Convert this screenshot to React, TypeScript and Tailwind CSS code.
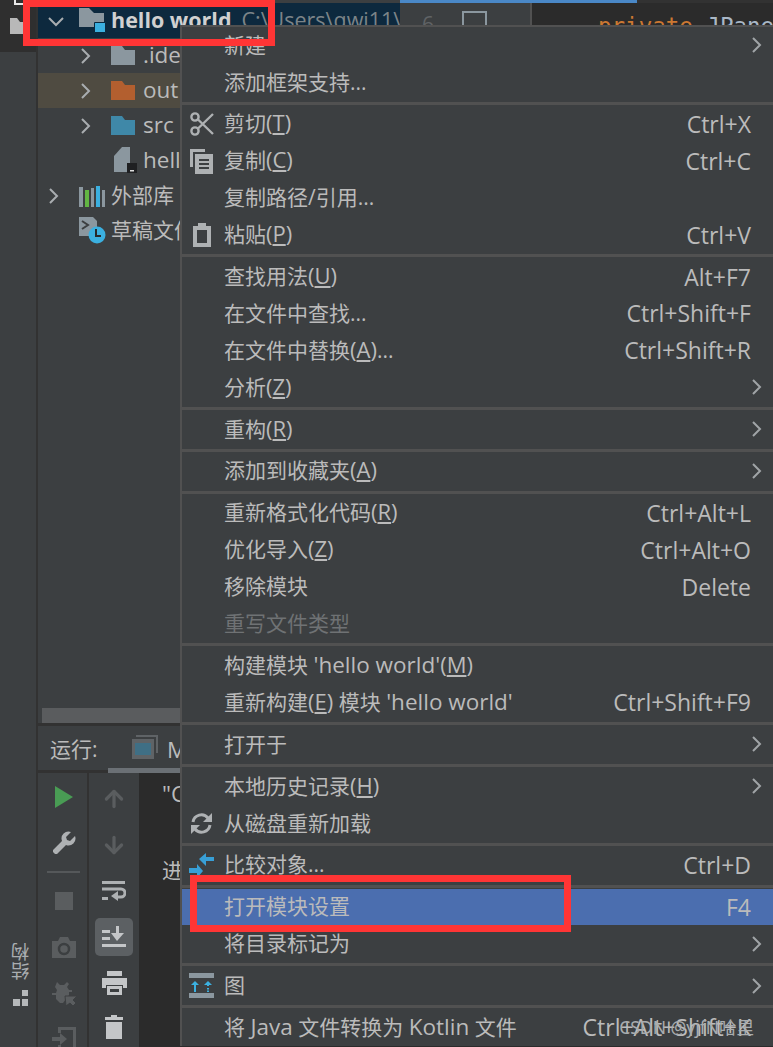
import React from "react";
import { ArrowDown, ArrowUp } from "lucide-react";

// --- small icons ---
const Chevron = ({ open = false }: { open?: boolean }) => (
  <svg width="18" height="18" viewBox="0 0 18 18" fill="none" stroke="#a9adb0" strokeWidth="2">
    {open ? <path d="M2 6l7 7 7-7" /> : <path d="M3 2l7 7-7 7" />}
  </svg>
);

const Folder = ({ color }: { color: string }) => (
  <svg width="24" height="19" viewBox="0 0 24 19">
    <path d="M0 0h11l3 4h10v15H0z" fill={color} />
  </svg>
);

const Submenu = () => (
  <svg width="10" height="16" viewBox="0 0 10 16" fill="none" stroke="#a0a4a7" strokeWidth="2">
    <path d="M1 1l7 7-7 7" />
  </svg>
);

const ScissorsIcon = () => (
  <svg width="24" height="24" viewBox="0 0 24 24" fill="none" stroke="#aeb1b3" strokeWidth="2.4">
    <circle cx="5" cy="5" r="3.6" />
    <circle cx="5" cy="19" r="3.6" />
    <path d="M8 7.5L23 22M8 16.5L23 2" />
  </svg>
);

const CopyIcon = () => (
  <svg width="23" height="25" viewBox="0 0 23 25">
    <path d="M0 0h15v3H3v15H0z" fill="#aeb1b3" />
    <path d="M5 5h18v20H5z" fill="#aeb1b3" />
    <path d="M9 10h10v2H9zM9 14h10v2H9zM9 18h10v2H9z" fill="#3c3f41" />
  </svg>
);

const PasteIcon = () => (
  <svg width="18" height="24" viewBox="0 0 18 24">
    <path d="M0 3h5V0h8v3h5v21H0z" fill="#aeb1b3" />
    <path d="M4 7h10v13H4z" fill="#3c3f41" />
  </svg>
);

const ReloadIcon = () => (
  <svg width="23" height="23" viewBox="0 0 23 23" fill="none" stroke="#aeb1b3" strokeWidth="3">
    <path d="M3 10a8.5 8.5 0 0 1 15-4M20 13a8.5 8.5 0 0 1-15 4" />
    <path d="M22 1v9h-9z" fill="#aeb1b3" stroke="none" />
    <path d="M1 22v-9h9z" fill="#aeb1b3" stroke="none" />
  </svg>
);

const CompareIcon = () => (
  <svg width="25" height="25" viewBox="0 0 25 25">
    <path d="M25 8h-8v5l-7-7 7-6v4h8z" fill="#389fd6" />
    <path d="M0 15h8v-4l6 7-6 7v-5H0z" fill="#389fd6" />
  </svg>
);

const DiagramIcon = () => (
  <svg width="25" height="25" viewBox="0 0 25 25">
    <path d="M0 0h25v5H0zM0 20h25v5H0z" fill="#8b979f" />
    <path d="M6 8l-4 4h3v7h2v-7h3z" fill="#3bb0e0" />
    <path d="M19 8l-4 4h3v1h2v-1h3zM18 15h2v1.500h-2zM18 17.500h2v1.500h-2z" fill="#3bb0e0" />
  </svg>
);

// latin runs sit slightly bigger than the CJK around them
const L = ({ children }: { children: React.ReactNode }) => (
  <span className="text-[22.5px] leading-none">{children}</span>
);

// --- menu model ---
type Row = {
  label: React.ReactNode;
  keys?: string;
  sub?: boolean;
  icon?: React.ReactNode;
  active?: boolean;
  muted?: boolean;
};

const Mn = ({ c }: { c: string }) => (
  <span className="text-[22px] leading-none">
    (<u className="underline-offset-2">{c}</u>)
  </span>
);

const groups: Row[][] = [
  [{ label: "新建", sub: true }, { label: "添加框架支持..." }],
  [
    { label: <>剪切<Mn c="T" /></>, keys: "Ctrl+X", icon: <ScissorsIcon /> },
    { label: <>复制<Mn c="C" /></>, keys: "Ctrl+C", icon: <CopyIcon /> },
    { label: "复制路径/引用..." },
    { label: <>粘贴<Mn c="P" /></>, keys: "Ctrl+V", icon: <PasteIcon /> },
  ],
  [
    { label: <>查找用法<Mn c="U" /></>, keys: "Alt+F7" },
    { label: "在文件中查找...", keys: "Ctrl+Shift+F" },
    { label: <>在文件中替换<Mn c="A" />...</>, keys: "Ctrl+Shift+R" },
    { label: <>分析<Mn c="Z" /></>, sub: true },
  ],
  [{ label: <>重构<Mn c="R" /></>, sub: true }],
  [{ label: <>添加到收藏夹<Mn c="A" /></>, sub: true }],
  [
    { label: <>重新格式化代码<Mn c="R" /></>, keys: "Ctrl+Alt+L" },
    { label: <>优化导入<Mn c="Z" /></>, keys: "Ctrl+Alt+O" },
    { label: "移除模块", keys: "Delete" },
    { label: "重写文件类型", muted: true },
  ],
  [
    { label: <>构建模块 <L>'hello world'</L><Mn c="M" /></> },
    { label: <>重新构建<Mn c="E" /> 模块 <L>'hello world'</L></>, keys: "Ctrl+Shift+F9" },
  ],
  [{ label: "打开于", sub: true }],
  [
    { label: <>本地历史记录<Mn c="H" /></>, sub: true },
    { label: "从磁盘重新加载", icon: <ReloadIcon /> },
  ],
  [{ label: "比较对象...", keys: "Ctrl+D", icon: <CompareIcon /> }],
  [
    { label: "打开模块设置", keys: "F4", active: true },
    { label: "将目录标记为", sub: true },
  ],
  [{ label: "图", sub: true, icon: <DiagramIcon /> }],
  [{ label: <>将 <L>Java</L> 文件转换为 <L>Kotlin</L> 文件</>, keys: "Ctrl+Alt+Shift+K" }],
];

const MenuRow = ({ row }: { row: Row }) => (
  <div
    className={`flex h-[36.9px] shrink-0 items-center ${row.active ? "bg-[#4b6eaf]" : ""} ${
      row.muted ? "text-[#6f7274]" : "text-[#bbbbbb]"
    }`}
  >
    <div className="flex w-[42px] shrink-0 items-center justify-center pr-[3px]">{row.icon}</div>
    <div className="flex-1 whitespace-nowrap">{row.label}</div>
    {row.keys && <div className="pr-[22px] text-[23px] whitespace-nowrap">{row.keys}</div>}
    {row.sub && (
      <div className="pr-[11px]">
        <Submenu />
      </div>
    )}
  </div>
);

const ContextMenu = () => (
  <div className="absolute top-[25px] right-0 left-[180px] flex flex-col overflow-hidden border-t-2 border-l-2 border-[#515151] bg-[#3c3f41] text-[21px]">
    {groups.map((g, i) => (
      <div key={i} className={`flex flex-col ${i > 0 ? "mt-[1px] border-t-[3px] border-[#515151] pt-[1px]" : ""}`}>
        {g.map((r, j) => (
          <MenuRow key={j} row={r} />
        ))}
      </div>
    ))}
  </div>
);

// --- project tree ---
const TreeRow = ({
  indent,
  arrow,
  icon,
  className,
  children,
}: {
  indent: string;
  arrow?: React.ReactNode;
  icon: React.ReactNode;
  className?: string;
  children: React.ReactNode;
}) => (
  <div className={`flex h-[35px] items-center whitespace-nowrap ${indent} ${className ?? ""}`}>
    <div className="flex w-[32px] shrink-0 items-center">{arrow}</div>
    <div className="flex w-[32px] shrink-0 items-center">{icon}</div>
    {children}
  </div>
);

const ProjectTree = () => (
  <div className="flex w-[362px] shrink-0 flex-col overflow-hidden pt-[3px] text-[21px] text-[#bbbbbb]">
    <TreeRow
      indent="pl-[9px]"
      className="bg-[#0d293e]"
      arrow={<Chevron open />}
      icon={
        <svg width="27" height="25" viewBox="0 0 27 25">
          <path d="M0 0h10l5 5h10v14H0z" fill="#8b979f" />
          <path d="M15.500 14.500h11v10h-11z" fill="#3bb0e0" stroke="#0d293e" />
        </svg>
      }
    >
      <span className="text-[21.5px] font-bold text-[#d0d0d0]">hello world</span>
      <span className="ml-[10px] text-[21.5px] text-[#7c8488]">C:\Users\qwi11\</span>
    </TreeRow>
    <TreeRow indent="pl-[41px]" arrow={<Chevron />} icon={<Folder color="#8b979f" />}>
      <L>.idea</L>
    </TreeRow>
    <TreeRow indent="pl-[41px]" className="bg-[#4f4b41]" arrow={<Chevron />} icon={<Folder color="#b35f2f" />}>
      <L>out</L>
    </TreeRow>
    <TreeRow indent="pl-[41px]" arrow={<Chevron />} icon={<Folder color="#3f88a8" />}>
      <L>src</L>
    </TreeRow>
    <TreeRow
      indent="pl-[41px]"
      icon={
        <svg width="26" height="27" viewBox="0 0 26 27">
          <path d="M3 9l8-9h8v25H3z" fill="#8b979f" />
          <path d="M16 16h10v10H16z" fill="#1f2022" />
          <path d="M19 23h4v1.500h-4z" fill="#ddd" />
        </svg>
      }
    >
      <L>hello</L>
    </TreeRow>
    <TreeRow
      indent="pl-[9px]"
      arrow={<Chevron />}
      icon={
        <svg width="26" height="22" viewBox="0 0 26 22">
          <path d="M0 2h4v20H0zM12 3h3v19h-3zM23 5h3v17h-3z" fill="#8b979f" />
          <path d="M6 5h4v17H6z" fill="#62b543" />
          <path d="M17 1h4v21h-4z" fill="#3bb0e0" />
        </svg>
      }
    >
      外部库
    </TreeRow>
    <TreeRow
      indent="pl-[9px]"
      arrow={<span />}
      icon={
        <svg width="27" height="27" viewBox="0 0 27 27">
          <path d="M0 0h14l4 4v6a9 9 0 0 0-8 9H0z" fill="#8b979f" />
          <path d="M3 4l6 4-6 4" fill="none" stroke="#3c3f41" strokeWidth="2" />
          <circle cx="18" cy="18" r="8.500" fill="#3bb0e0" />
          <path d="M17 12v7h5" fill="none" stroke="#27282a" strokeWidth="2" />
        </svg>
      }
    >
      草稿文件
    </TreeRow>
  </div>
);

// --- run tool window ---
const Slot = ({ active, children }: { active?: boolean; children: React.ReactNode }) => (
  <div className="flex h-[46px] shrink-0 items-center justify-center">
    <div className={`flex h-[38px] w-[38px] items-center justify-center rounded-[5px] ${active ? "bg-[#5c6063]" : ""}`}>
      {children}
    </div>
  </div>
);

const RunPanel = () => (
  <div className="flex min-h-0 flex-1 flex-col">
    <div className="ml-[4px] h-[15px] shrink-0 bg-[#5a5c5e]" />
    <div className="h-[3px] shrink-0 bg-[#323232]" />
    <div className="flex h-[42px] shrink-0 items-center text-[21px] text-[#bbbbbb]">
      <span className="mt-[5px] ml-[12px] w-[82px]">运行:</span>
      <svg width="26" height="24" viewBox="0 0 26 24">
        <path d="M4 0h22v18h-2V2H4z" fill="#5f6366" />
        <path d="M0 4h22v20H0z" fill="#5f6366" />
        <path d="M3 8h16v12H3z" fill="#3f6f85" />
      </svg>
      <span className="mt-[5px] ml-[9px] text-[22.5px]">Main</span>
    </div>
    <div className="flex h-[5px] shrink-0">
      <div className="mt-[2px] w-[70px] bg-[#323232]" />
      <div className="flex-1 bg-[#6b7075]" />
    </div>
    <div className="flex min-h-0 flex-1">
      <div className="flex w-[51px] shrink-0 flex-col border-r-2 border-[#323232] pt-[1px] pl-[2px]">
        <Slot>
          <svg width="18" height="22" viewBox="0 0 18 22">
            <path d="M0 0l18 11L0 22z" fill="#499c54" />
          </svg>
        </Slot>
        <Slot>
          <svg width="24" height="24" viewBox="0 0 24 24">
            <path d="M23 5l-5 5-3-1-1-3 5-5a7 7 0 0 0-9 9L1 19v2l2 2h2l9-9a7 7 0 0 0 9-9z" fill="#aeb1b3" />
          </svg>
        </Slot>
        <div className="mx-[7px] my-[5px] h-[2px] shrink-0 bg-[#55585a]" />
        <Slot>
          <div className="h-[18px] w-[18px] bg-[#5a5d5f]" />
        </Slot>
        <Slot>
          <svg width="24" height="21" viewBox="0 0 24 21">
            <path d="M0 4h6l2-4h8l2 4h6v17H0z" fill="#5a5d5f" />
            <circle cx="12" cy="12" r="5" fill="none" stroke="#3c3f41" strokeWidth="2.500" />
          </svg>
        </Slot>
        <Slot>
          <svg width="26" height="26" viewBox="0 0 26 26">
            <path d="M6 2l3 3h4l3-3 2 2-2 3 2 3h3v2h-3v3l-6 8H9l-4-4v-4H1v-2h4l1-3-2-3z" fill="#5a5d5f" />
            <path d="M14 16h12l-4 4 3 3-3 3-3-3-4 3z" fill="#5a5d5f" stroke="#3c3f41" />
          </svg>
        </Slot>
        <Slot>
          <svg width="24" height="24" viewBox="0 0 24 24">
            <path d="M6 0h18v24H6v-6h3v3h12V3H9v3H6z" fill="#5a5d5f" />
            <path d="M0 10h8V6l7 6-7 6v-4H0z" fill="#5a5d5f" />
          </svg>
        </Slot>
      </div>
      <div className="flex w-[50px] shrink-0 flex-col pt-[3px]">
        <Slot>
          <ArrowUp size={26} strokeWidth={3} color="#5a5d5f" />
        </Slot>
        <Slot>
          <ArrowDown size={26} strokeWidth={3} color="#5a5d5f" />
        </Slot>
        <Slot>
          <svg width="24" height="24" viewBox="0 0 24 24" fill="none">
            <path d="M0 2h23v3H0zM0 18h6v3H0z" fill="#aeb1b3" />
            <path d="M0 10h19a4 4 0 0 1 0 8h-5" stroke="#aeb1b3" strokeWidth="3" />
            <path d="M16 12v10l-7-5z" fill="#aeb1b3" />
          </svg>
        </Slot>
        <Slot active>
          <svg width="24" height="22" viewBox="0 0 24 22">
            <path d="M0 4h8v3H0zM0 11h8v3H0zM0 18h24v3H0z" fill="#c4c6c8" />
            <path d="M14 0h3v7h5l-7 8-6-8h5z" fill="#c4c6c8" />
          </svg>
        </Slot>
        <Slot>
          <svg width="25" height="24" viewBox="0 0 25 24">
            <path d="M5 0h15v5H5zM0 7h25v10h-4v-3H4v3H0z" fill="#c4c6c8" />
            <path d="M5 15h15v9H5z" fill="#c4c6c8" />
            <path d="M8 18h9v3H8z" fill="#3c3f41" />
          </svg>
        </Slot>
        <div className="-mt-[2px]">
          <Slot>
            <svg width="18" height="24" viewBox="0 0 18 24">
              <path d="M0 2h6V0h6v2h6v3H0zM1 7h16v17H1z" fill="#c4c6c8" />
            </svg>
          </Slot>
        </div>
      </div>
      <div className="flex-1 bg-[#2b2b2b] pt-[6px] pl-[23px] text-[21px] leading-[30px] text-[#bbbbbb]">
        <L>"C</L>
        <div className="mt-[46px]">进程</div>
      </div>
    </div>
  </div>
);

// --- editor behind the menu ---
const EditorPeek = () => (
  <div className="flex min-w-0 flex-1 flex-col overflow-hidden">
    <div className="flex h-[3px] shrink-0 bg-[#323232]">
      <div className="w-[237px] bg-[#4a88c7]" />
    </div>
    <div className="flex h-[40px] shrink-0">
      <div className="flex w-[132px] shrink-0 border-r-2 border-[#515151] pt-[7px] text-[#606366]">
        <span className="ml-[22px] text-[21px] leading-[28px]">6</span>
        <div className="mt-[1px] ml-[28px] h-[24px] w-[25px] border-2 border-[#8b979f]" />
      </div>
      <div className="flex-1 bg-[#2b2b2b] pt-[9px] pl-[66px] font-['DejaVu_Sans_Mono',monospace] text-[22.5px] leading-[28px] whitespace-nowrap text-[#a9b7c6]">
        <span className="text-[#cc7832]">private</span> JPane
      </div>
    </div>
  </div>
);

export default function App() {
  return (
    <div className="relative flex h-[1047px] w-[773px] overflow-hidden bg-[#3c3f41] font-['Open_Sans','Noto_Sans_CJK_SC',sans-serif]">
      <aside className="flex w-[38px] shrink-0 flex-col border-r-2 border-[#323232]">
        <div className="flex h-[52px] items-center justify-center bg-[#2f2f2f] pr-[1px]">
          <svg width="15" height="16" viewBox="0 0 15 16">
            <path d="M0 0h7l3 4h5v12H0z" fill="#b8b8b8" />
          </svg>
        </div>
        <div className="mt-[891px] flex flex-col items-center gap-[9px] pl-[5px] text-[#a9adb0]">
          <span className="rotate-180 text-[18.5px] leading-[20px] [writing-mode:vertical-rl]">结构</span>
          <svg width="18" height="18" viewBox="0 0 18 18">
            <path d="M10 1h6v6h-6zM1 10h7v7H1zM10 10h6v7h-6z" fill="#b5b8ba" />
          </svg>
        </div>
      </aside>

      <div className="flex min-w-0 flex-1 flex-col">
        <div className="flex h-[708px] shrink-0">
          <ProjectTree />
          <EditorPeek />
        </div>
        <RunPanel />
      </div>

      <ContextMenu />

      <div className="absolute top-[1014px] right-[19px] font-['Noto_Sans','Noto_Sans_CJK_SC',sans-serif] text-[17.5px] text-[#a8acae]">
        CSDN @yjfN哈里
      </div>

      {/* corner of the window behind, cut by the crop */}
      <div className="absolute top-0 left-[14px] h-[5px] w-[9px] border-b-2 border-l-2 border-[#e8e8e8]" />

      {/* red annotation boxes */}
      <div className="absolute top-0 left-[23px] h-[46px] w-[252px] border-[7px] border-[#ff3535]" />
      <div className="absolute top-[875px] left-[190px] h-[57px] w-[381px] border-[7px] border-[#ff3535]" />
    </div>
  );
}
